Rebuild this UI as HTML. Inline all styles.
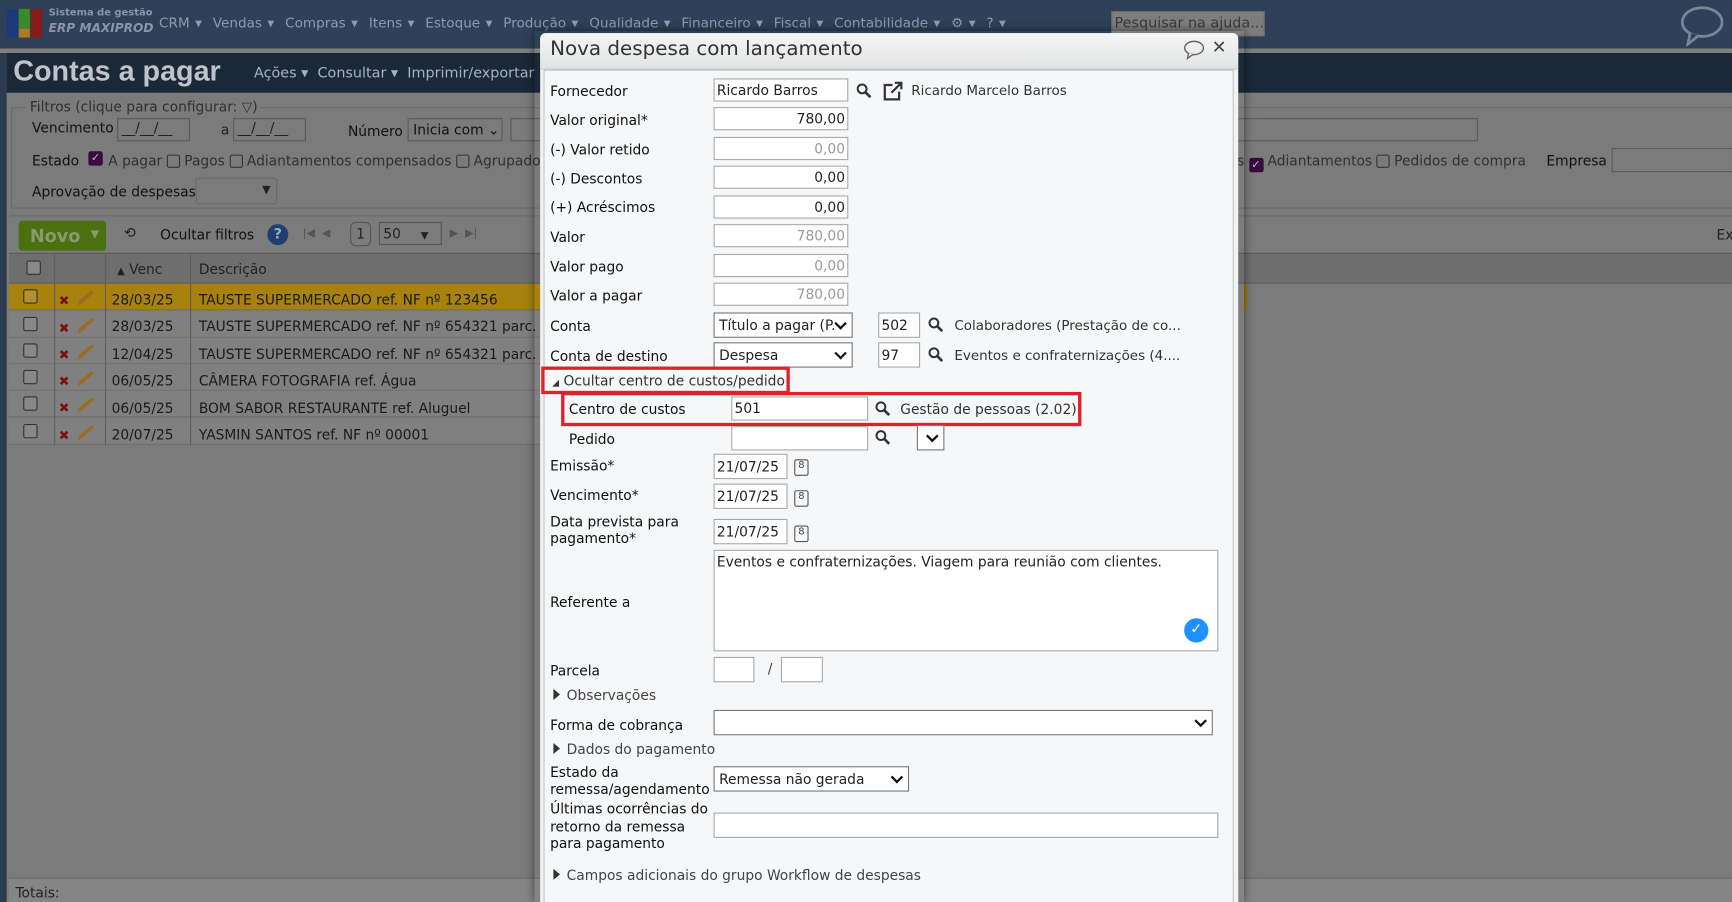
<!DOCTYPE html>
<html><head><meta charset="utf-8">
<style>
*{box-sizing:border-box;margin:0;padding:0}
html,body{width:1732px;height:902px;overflow:hidden;background:#7b7b7b}
#w{position:absolute;left:0;top:0;width:1568px;height:817px;transform:scale(1.10459,1.10404);transform-origin:0 0;font-family:"DejaVu Sans","Liberation Sans",sans-serif;font-size:12.5px;color:#222}
.a{position:absolute;white-space:nowrap}
.in{position:absolute;background:#fff;border:1px solid #a9a9a9;height:21px;font-size:12.5px;line-height:19px;padding:0 2px;white-space:nowrap;overflow:hidden}
.r{text-align:right}
.g{color:#999}
.sel::after{content:"";position:absolute;right:6px;top:5px;width:6px;height:6px;border-right:2px solid #111;border-bottom:2px solid #111;transform:rotate(45deg)}
.mag{position:absolute;width:14px;height:14px}
.lbl{position:absolute;white-space:nowrap;color:#111}
.tri{display:inline-block;width:0;height:0;border-top:5px solid transparent;border-bottom:5px solid transparent;border-left:6px solid #333;margin-right:6px}
.cal{position:absolute;width:13px;height:15px;border:1.5px solid #555;border-radius:2px;font-size:9px;line-height:11px;text-align:center;color:#444}
.row{position:absolute;left:8px;width:482px;height:24px;background:#808080;border-bottom:1px solid #707070;color:#1a1a1a}
.cb{position:absolute;width:13px;height:13px;border:1px solid #333;border-radius:2px;background:#888}
.ic{position:absolute;left:53px;width:36px;height:18px}
</style></head><body><div id="w">
<div class="a" style="left:0;top:0;width:1568px;height:44px;background:#2e4159"></div>
<div class="a" style="left:6px;top:8px;width:10px;height:26px;background:#1c3a7a"></div>
<div class="a" style="left:17px;top:8px;width:10px;height:18px;background:#3a8a2a"></div>
<div class="a" style="left:17px;top:26px;width:10px;height:8px;background:#b07820"></div>
<div class="a" style="left:28px;top:8px;width:10px;height:26px;background:#8a1a1a"></div>
<div class="a" style="left:44px;top:7px;font-size:9px;color:#8a96a6;font-weight:bold">Sistema de gestão</div>
<div class="a" style="left:44px;top:19px;font-size:11px;color:#8a96a6;font-weight:bold;font-style:italic">ERP MAXIPROD</div>
<div class="a" style="left:144px;top:14px;color:#8f9bab;font-size:12.3px;word-spacing:1px">CRM ▾ &nbsp;Vendas ▾ &nbsp;Compras ▾ &nbsp;Itens ▾ &nbsp;Estoque ▾ &nbsp;Produção ▾ &nbsp;Qualidade ▾ &nbsp;Financeiro ▾ &nbsp;Fiscal ▾ &nbsp;Contabilidade ▾ &nbsp;⚙ ▾ &nbsp;? ▾</div>
<div class="a" style="left:1006px;top:10px;width:139px;height:23px;background:#7d7d7d;border:1px solid #6a6a6a;color:#3a3a3a;font-size:13px;line-height:21px;padding-left:2px">Pesquisar na ajuda...</div>
<svg class="a" style="left:1520px;top:4px" width="42" height="38" viewBox="0 0 42 38"><ellipse cx="21" cy="16" rx="18" ry="13" fill="none" stroke="#7a8595" stroke-width="2.5"/><path d="M10 26 L8 36 L18 28" fill="#2e4159" stroke="#7a8595" stroke-width="2.5"/></svg>
<div class="a" style="left:0;top:44px;width:1568px;height:4px;background:#7f7f7f"></div>
<div class="a" style="left:0;top:48px;width:6px;height:769px;background:#2a3b50"></div>
<div class="a" style="left:6px;top:48px;width:1562px;height:36px;background:#1b2838"></div>
<div class="a" style="left:12px;top:49px;font-size:26px;font-weight:bold;color:#bfc4ca;font-family:'Liberation Sans',sans-serif">Contas a pagar</div>
<div class="a" style="left:230px;top:59px;color:#a9b2bc;font-size:13px">Ações ▾ &nbsp;Consultar ▾ &nbsp;Imprimir/exportar</div>
<div class="a" style="left:10px;top:97px;width:1558px;height:92px;border:1px solid #6a6a6a;border-right:none"></div>
<div class="a" style="left:24px;top:89px;background:#7b7b7b;padding:0 3px;color:#303030">Filtros (clique para configurar: ▽)</div>
<div class="a" style="left:29px;top:108px;color:#111">Vencimento</div>
<div class="a" style="left:106px;top:107px;width:66px;height:21px;border:1px solid #5a5a5a;color:#222;padding-left:3px">__/__/__</div>
<div class="a" style="left:200px;top:110px;color:#222">a</div>
<div class="a" style="left:211px;top:107px;width:66px;height:21px;border:1px solid #5a5a5a;color:#222;padding-left:3px">__/__/__</div>
<div class="a" style="left:315px;top:111px;color:#111">Número</div>
<div class="a" style="left:369px;top:107px;width:86px;height:21px;border:1px solid #5a5a5a;color:#111;padding-left:4px;line-height:19px">Inicia com ⌄</div>
<div class="a" style="left:462px;top:107px;width:876px;height:21px;border:1px solid #5a5a5a"></div>
<div class="a" style="left:29px;top:138px;color:#111">Estado</div>
<div class="a" style="left:80px;top:137px;width:13px;height:13px;background:#3a0a40;border-radius:2px;color:#bbb;font-size:10px;line-height:13px;text-align:center">✓</div>
<div class="a" style="left:98px;top:138px;color:#303030">A pagar <span style="display:inline-block;width:12px;height:12px;border:1px solid #333;border-radius:2px;vertical-align:-2px"></span> Pagos <span style="display:inline-block;width:12px;height:12px;border:1px solid #333;border-radius:2px;vertical-align:-2px"></span> Adiantamentos compensados <span style="display:inline-block;width:12px;height:12px;border:1px solid #333;border-radius:2px;vertical-align:-2px"></span> Agrupados</div>
<div class="a" style="left:1120px;top:138px;color:#303030">s <span style="display:inline-block;width:13px;height:13px;background:#3a0a40;border-radius:2px;color:#bbb;font-size:10px;line-height:13px;text-align:center;vertical-align:-2px">✓</span> Adiantamentos <span style="display:inline-block;width:12px;height:12px;border:1px solid #333;border-radius:2px;vertical-align:-2px"></span> Pedidos de compra</div>
<div class="a" style="left:1400px;top:138px;color:#111">Empresa</div>
<div class="a" style="left:1459px;top:134px;width:110px;height:22px;border:1px solid #5a5a5a"></div>
<div class="a" style="left:29px;top:166px;color:#111">Aprovação de despesas</div>
<div class="a" style="left:177px;top:161px;width:74px;height:24px;border:1px solid #6a6a6a;border-radius:3px;color:#222;text-align:right;padding-right:5px;font-size:10px;line-height:22px">▼</div>
<div class="a" style="left:8px;top:195px;width:1560px;height:1px;background:#6a6a6a"></div>
<div class="a" style="left:17px;top:200px;width:79px;height:27px;background:#4a7010;border-radius:3px"></div>
<div class="a" style="left:27px;top:204px;font-size:16px;font-weight:bold;color:#8a9a6a">Novo</div>
<div class="a" style="left:82px;top:207px;font-size:10px;color:#8a9a6a">▼</div>
<div class="a" style="left:112px;top:204px;font-size:13px;color:#222">⟲</div>
<div class="a" style="left:145px;top:205px;color:#111">Ocultar filtros</div>
<div class="a" style="left:242px;top:203px;width:19px;height:19px;border-radius:50%;background:#1e3f70;color:#9ab;font-weight:bold;text-align:center;line-height:19px;font-size:13px">?</div>
<div class="a" style="left:274px;top:206px;color:#555;font-size:10px">|◀ &nbsp;◀</div>
<div class="a" style="left:317px;top:201px;width:19px;height:22px;border:1px solid #555;border-radius:5px;text-align:center;line-height:20px;color:#222">1</div>
<div class="a" style="left:343px;top:201px;width:57px;height:21px;border:1px solid #555;color:#222;padding-left:3px;line-height:19px">50 <span style="font-size:9px;margin-left:14px">▼</span></div>
<div class="a" style="left:407px;top:206px;color:#555;font-size:10px">▶ &nbsp;▶|</div>
<div class="a" style="left:1554px;top:205px;color:#222">Ex</div>
<div class="a" style="left:8px;top:229px;width:1560px;height:28px;background:#6e6e6e;border-top:1px solid #5a5a5a;border-bottom:1px solid #5a5a5a"></div>
<div class="cb" style="left:24px;top:236px"></div>
<div class="a" style="left:106px;top:236px;color:#222"><span style="font-size:9px">▲</span> Venc</div>
<div class="a" style="left:180px;top:236px;color:#222">Descrição</div>
<div class="a" style="left:1126px;top:257px;width:442px;height:24px;background:#7b7b7b;border-left:3px solid #9a7a10"></div>
<div class="row" style="top:257px;background:#a8820f"></div>
<div class="row" style="top:282px"></div>
<div class="row" style="top:306px"></div>
<div class="row" style="top:330px"></div>
<div class="row" style="top:354px"></div>
<div class="row" style="top:379px"></div>
<div class="a" style="left:49px;top:229px;width:1px;height:174px;background:#5e5e5e"></div>
<div class="a" style="left:95px;top:229px;width:1px;height:174px;background:#5e5e5e"></div>
<div class="a" style="left:172px;top:229px;width:1px;height:174px;background:#5e5e5e"></div>
<div class="a" style="left:8px;top:795px;width:1560px;height:22px;background:#858585;border-top:1px solid #6a6a6a"></div>
<div class="a" style="left:14px;top:801px;color:#222">Totais:</div>
<div class="cb" style="left:21px;top:262px;background:#b59030"></div>
<div class="cb" style="left:21px;top:287px"></div>
<div class="cb" style="left:21px;top:311px"></div>
<div class="cb" style="left:21px;top:335px"></div>
<div class="cb" style="left:21px;top:359px"></div>
<div class="cb" style="left:21px;top:384px"></div>
<svg class="ic" style="top:261px" viewBox="0 0 36 18"><path d="M2 8 L8 14 M8 8 L2 14" stroke="#7a1010" stroke-width="2.4"/><path d="M17 16 L19 11 L30 2 L32 4 L21 14 Z" fill="#a06a20"/></svg>
<svg class="ic" style="top:286px" viewBox="0 0 36 18"><path d="M2 8 L8 14 M8 8 L2 14" stroke="#7a1010" stroke-width="2.4"/><path d="M17 16 L19 11 L30 2 L32 4 L21 14 Z" fill="#a06a20"/></svg>
<svg class="ic" style="top:310px" viewBox="0 0 36 18"><path d="M2 8 L8 14 M8 8 L2 14" stroke="#7a1010" stroke-width="2.4"/><path d="M17 16 L19 11 L30 2 L32 4 L21 14 Z" fill="#a06a20"/></svg>
<svg class="ic" style="top:334px" viewBox="0 0 36 18"><path d="M2 8 L8 14 M8 8 L2 14" stroke="#7a1010" stroke-width="2.4"/><path d="M17 16 L19 11 L30 2 L32 4 L21 14 Z" fill="#a06a20"/></svg>
<svg class="ic" style="top:358px" viewBox="0 0 36 18"><path d="M2 8 L8 14 M8 8 L2 14" stroke="#7a1010" stroke-width="2.4"/><path d="M17 16 L19 11 L30 2 L32 4 L21 14 Z" fill="#a06a20"/></svg>
<svg class="ic" style="top:383px" viewBox="0 0 36 18"><path d="M2 8 L8 14 M8 8 L2 14" stroke="#7a1010" stroke-width="2.4"/><path d="M17 16 L19 11 L30 2 L32 4 L21 14 Z" fill="#a06a20"/></svg>
<div class="a" style="left:101px;top:260px;line-height:24.4px;color:#1a1a1a">28/03/25<br>28/03/25<br>12/04/25<br>06/05/25<br>06/05/25<br>20/07/25</div>
<div class="a" style="left:180px;top:260px;line-height:24.4px;color:#1a1a1a">TAUSTE SUPERMERCADO ref. NF nº 123456<br>TAUSTE SUPERMERCADO ref. NF nº 654321 parc.<br>TAUSTE SUPERMERCADO ref. NF nº 654321 parc.<br>CÂMERA FOTOGRAFIA ref. Água<br>BOM SABOR RESTAURANTE ref. Aluguel<br>YASMIN SANTOS ref. NF nº 00001</div>

<div class="a" style="left:484px;top:28px;width:642px;height:789px;box-shadow:0 0 8px rgba(0,0,0,.5)"></div>
<div class="a" style="left:489px;top:30px;width:632px;height:787px;background:#f1f2f3;border-radius:5px 5px 0 0"></div>
<div class="a" style="left:489px;top:30px;width:632px;height:33px;background:linear-gradient(#f6f6f6,#e2e3e4);border-radius:5px 5px 0 0;border-bottom:1px solid #c8c8c8"></div>
<div class="a" style="left:498px;top:34px;font-size:18px;color:#333">Nova despesa com lançamento</div>
<svg class="a" style="left:1071px;top:36px" width="20" height="18" viewBox="0 0 20 18"><ellipse cx="10" cy="7.5" rx="8.5" ry="6" fill="none" stroke="#666" stroke-width="1.3"/><path d="M5 12 L4 17 L9 13.3" fill="#eee" stroke="#666" stroke-width="1.3"/></svg>
<div class="a" style="left:1097px;top:33px;font-size:16px;font-weight:bold;color:#444">✕</div>
<div class="a" style="left:492px;top:63px;width:625px;height:754px;background:#f6f7f8;border:1px solid #c3c3c3;border-bottom:none"></div>

<div class="lbl" style="left:498px;top:75px">Fornecedor</div>
<div class="in" style="left:646px;top:71px;width:122px">Ricardo Barros</div>
<svg class="mag" style="left:775px;top:75px" viewBox="0 0 14 14"><circle cx="5.5" cy="5.5" r="4" fill="none" stroke="#333" stroke-width="1.8"/><path d="M8.5 8.5 L13 13" stroke="#333" stroke-width="2.4"/></svg>
<svg class="a" style="left:799px;top:73px" width="19" height="19" viewBox="0 0 19 19"><path d="M9 4 H2 V17 H15 V10" fill="none" stroke="#333" stroke-width="2"/><path d="M8 11 L16 3 M11 2 H17 V8" fill="none" stroke="#333" stroke-width="2"/></svg>
<div class="lbl" style="left:825px;top:75px;color:#333;font-size:12.2px">Ricardo Marcelo Barros</div>

<div class="lbl" style="left:498px;top:101px">Valor original*</div>
<div class="in r" style="left:646px;top:97px;width:122px">780,00</div>
<div class="lbl" style="left:498px;top:128px">(-) Valor retido</div>
<div class="in r g" style="left:646px;top:124px;width:122px">0,00</div>
<div class="lbl" style="left:498px;top:154px">(-) Descontos</div>
<div class="in r" style="left:646px;top:150px;width:122px">0,00</div>
<div class="lbl" style="left:498px;top:180px">(+) Acréscimos</div>
<div class="in r" style="left:646px;top:177px;width:122px">0,00</div>
<div class="lbl" style="left:498px;top:207px">Valor</div>
<div class="in r g" style="left:646px;top:203px;width:122px">780,00</div>
<div class="lbl" style="left:498px;top:234px">Valor pago</div>
<div class="in r g" style="left:646px;top:230px;width:122px">0,00</div>
<div class="lbl" style="left:498px;top:260px">Valor a pagar</div>
<div class="in r g" style="left:646px;top:256px;width:122px">780,00</div>

<div class="lbl" style="left:498px;top:288px">Conta</div>
<div class="in sel" style="left:646px;top:283px;width:126px;height:23px;padding-left:4px;line-height:21px;border-color:#777">Título a pagar (P.</div>
<div class="in" style="left:795px;top:283px;width:38px;height:23px;line-height:21px">502</div>
<svg class="mag" style="left:840px;top:287px" viewBox="0 0 14 14"><circle cx="5.5" cy="5.5" r="4" fill="none" stroke="#333" stroke-width="1.8"/><path d="M8.5 8.5 L13 13" stroke="#333" stroke-width="2.4"/></svg>
<div class="lbl" style="left:864px;top:288px;color:#333;font-size:12.2px">Colaboradores (Prestação de co...</div>

<div class="lbl" style="left:498px;top:315px">Conta de destino</div>
<div class="in sel" style="left:646px;top:310px;width:126px;height:23px;padding-left:4px;line-height:21px;border-color:#777">Despesa</div>
<div class="in" style="left:795px;top:310px;width:38px;height:23px;line-height:21px">97</div>
<svg class="mag" style="left:840px;top:314px" viewBox="0 0 14 14"><circle cx="5.5" cy="5.5" r="4" fill="none" stroke="#333" stroke-width="1.8"/><path d="M8.5 8.5 L13 13" stroke="#333" stroke-width="2.4"/></svg>
<div class="lbl" style="left:864px;top:315px;color:#333;font-size:12.2px">Eventos e confraternizações (4....</div>

<div class="a" style="left:490px;top:332px;width:225px;height:25px;border:3px solid #e0202a"></div>
<div class="lbl" style="left:500px;top:337px;color:#333"><span style="font-size:8px;color:#333">◢</span> Ocultar centro de custos/pedido</div>
<div class="a" style="left:508px;top:355px;width:471px;height:31px;border:3px solid #e0202a"></div>
<div class="lbl" style="left:515px;top:363px">Centro de custos</div>
<div class="in" style="left:662px;top:359px;width:124px;height:22px">501</div>
<svg class="mag" style="left:792px;top:363px" viewBox="0 0 14 14"><circle cx="5.5" cy="5.5" r="4" fill="none" stroke="#333" stroke-width="1.8"/><path d="M8.5 8.5 L13 13" stroke="#333" stroke-width="2.4"/></svg>
<div class="lbl" style="left:815px;top:363px;color:#333">Gestão de pessoas (2.02)</div>
<div class="lbl" style="left:515px;top:390px">Pedido</div>
<div class="in" style="left:662px;top:386px;width:124px;height:22px"></div>
<svg class="mag" style="left:792px;top:389px" viewBox="0 0 14 14"><circle cx="5.5" cy="5.5" r="4" fill="none" stroke="#333" stroke-width="1.8"/><path d="M8.5 8.5 L13 13" stroke="#333" stroke-width="2.4"/></svg>
<div class="in sel" style="left:830px;top:385px;width:25px;height:23px;border-color:#777"></div>

<div class="lbl" style="left:498px;top:414px">Emissão*</div>
<div class="in" style="left:646px;top:411px;width:67px;height:23px;line-height:21px">21/07/25</div>
<div class="cal" style="left:719px;top:416px">8</div>
<div class="lbl" style="left:498px;top:441px">Vencimento*</div>
<div class="in" style="left:646px;top:438px;width:67px;height:23px;line-height:21px">21/07/25</div>
<div class="cal" style="left:719px;top:444px">8</div>
<div class="lbl" style="left:498px;top:465px;line-height:15px">Data prevista para<br>pagamento*</div>
<div class="in" style="left:646px;top:470px;width:67px;height:23px;line-height:21px">21/07/25</div>
<div class="cal" style="left:719px;top:476px">8</div>

<div class="lbl" style="left:498px;top:538px">Referente a</div>
<div class="in" style="left:646px;top:498px;width:457px;height:92px;white-space:normal;line-height:20px">Eventos e confraternizações. Viagem para reunião com clientes.</div>
<div class="a" style="left:1072px;top:560px;width:22px;height:22px;border-radius:50%;background:#1e90ff;color:#fff;text-align:center;line-height:22px;font-size:13px;font-weight:bold">✓</div>

<div class="lbl" style="left:498px;top:600px">Parcela</div>
<div class="in" style="left:646px;top:595px;width:37px;height:23px"></div>
<div class="lbl" style="left:695px;top:598px;color:#444">/</div>
<div class="in" style="left:707px;top:595px;width:38px;height:23px"></div>

<div class="lbl" style="left:501px;top:622px;color:#444"><span class="tri"></span>Observações</div>
<div class="lbl" style="left:498px;top:649px">Forma de cobrança</div>
<div class="in sel" style="left:646px;top:643px;width:452px;height:23px;border-color:#777"></div>
<div class="lbl" style="left:501px;top:671px;color:#444"><span class="tri"></span>Dados do pagamento</div>
<div class="lbl" style="left:498px;top:692px;line-height:15px">Estado da<br>remessa/agendamento</div>
<div class="in sel" style="left:646px;top:694px;width:177px;height:23px;padding-left:4px;line-height:21px;border-color:#777">Remessa não gerada</div>
<div class="lbl" style="left:498px;top:725px;line-height:15.5px">Últimas ocorrências do<br>retorno da remessa<br>para pagamento</div>
<div class="in" style="left:646px;top:736px;width:457px;height:23px"></div>
<div class="lbl" style="left:501px;top:785px;color:#444"><span class="tri"></span>Campos adicionais do grupo Workflow de despesas</div>
</div></body></html>
